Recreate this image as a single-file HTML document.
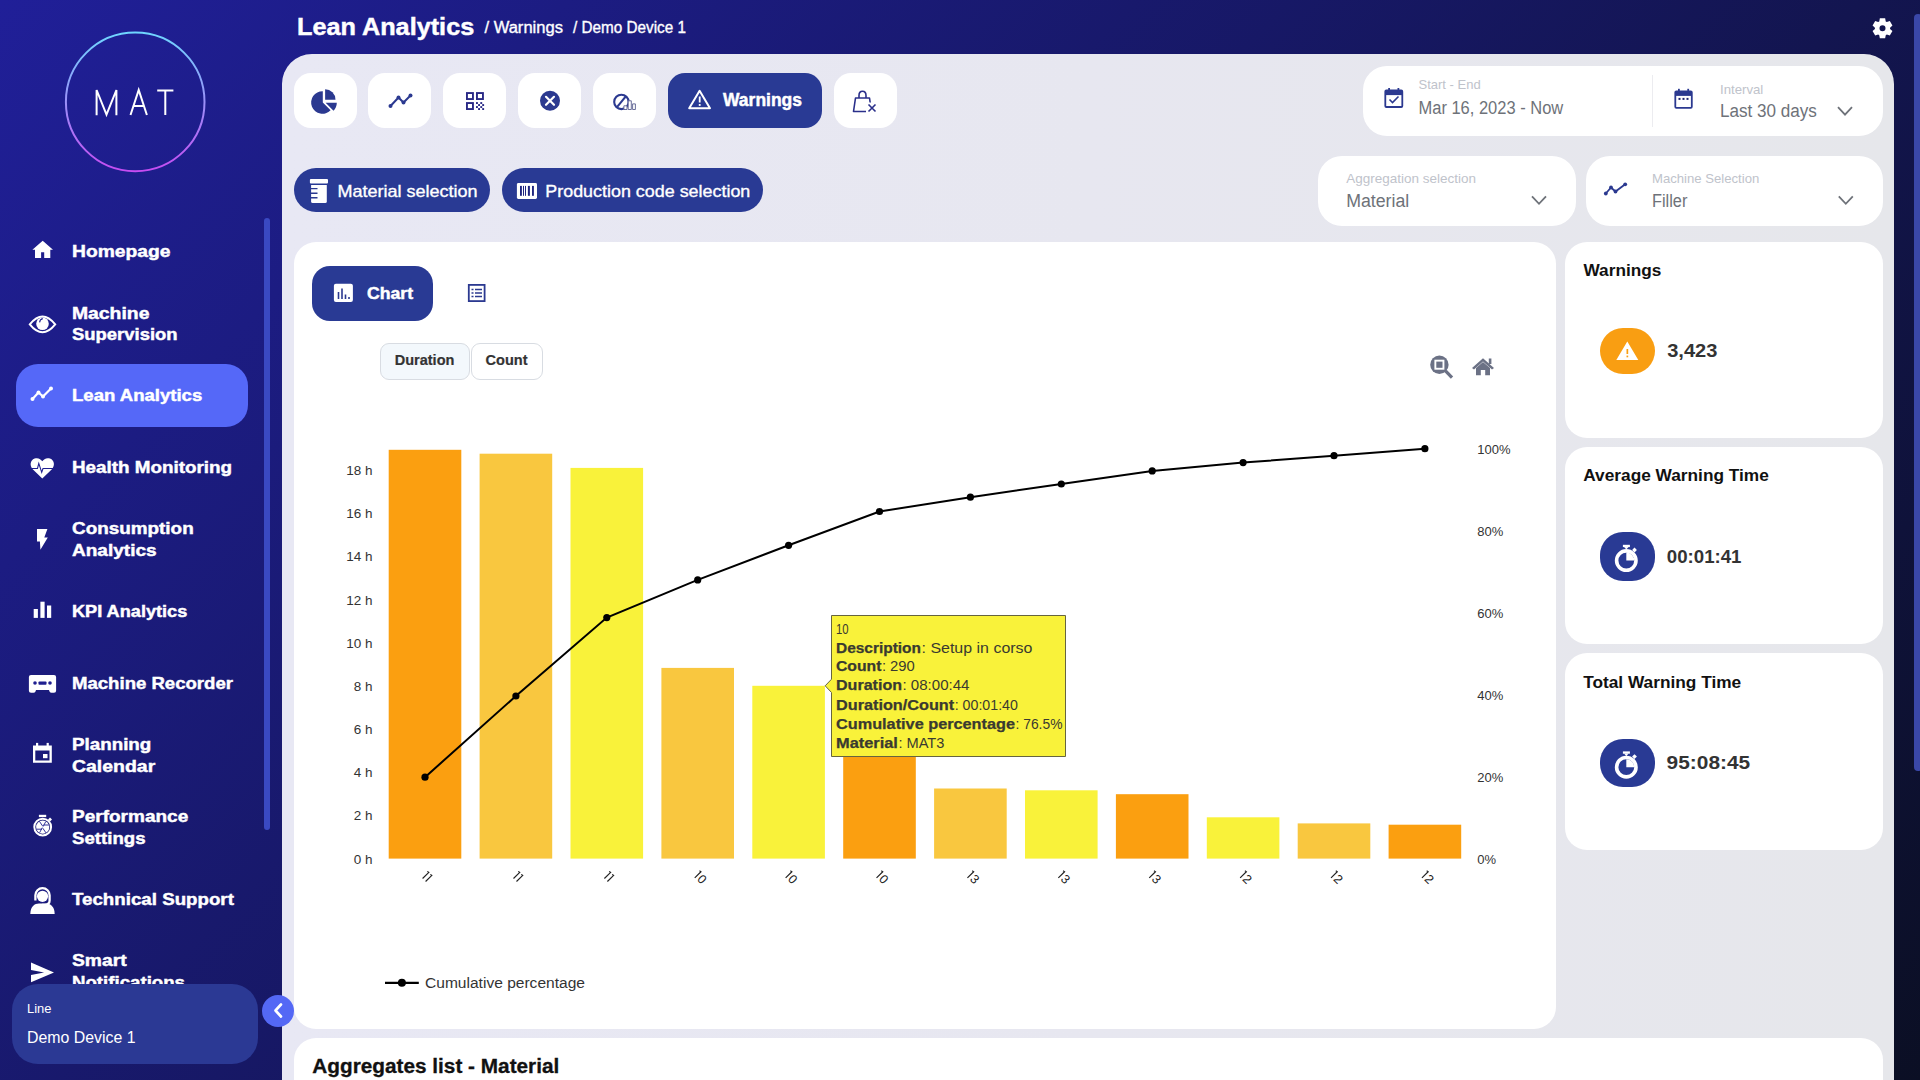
<!DOCTYPE html>
<html><head><meta charset="utf-8"><title>Lean Analytics</title><style>
*{margin:0;padding:0;box-sizing:border-box}
html,body{width:1920px;height:1080px;overflow:hidden}
body{position:relative;font-family:"Liberation Sans", sans-serif;background:linear-gradient(135deg,#201f98 0%,#0b0f24 100%)}
.a{position:absolute}
.card{position:absolute;background:#fff}
.btn{position:absolute;background:#fff;border-radius:16px}
svg text{font-family:"Liberation Sans", sans-serif}
</style></head>
<body>
<div class="a" style="left:16px;top:364px;width:232px;height:63px;background:#5568f8;border-radius:22px"></div>
<div class="a" style="left:264px;top:218px;width:6px;height:612px;background:#3a49c2;border-radius:3px"></div>
<div class="a" style="left:12px;top:984px;width:246px;height:80px;background:#2b3994;border-radius:26px"></div>
<div class="a" style="left:1914px;top:14px;width:8px;height:757px;background:#3a47a8;border-radius:4px"></div>
<div class="a" style="left:282px;top:54px;width:1612px;height:1146px;background:linear-gradient(90deg,#e8e8f4 0%,#e7e7f0 50%,#e6e7eb 100%);border-radius:30px 30px 0 0"></div>
<div class="a" style="left:294px;top:73px;width:62.5px;height:54.7px;background:#fff;border-radius:17px"></div>
<div class="a" style="left:368px;top:73px;width:63px;height:54.7px;background:#fff;border-radius:17px"></div>
<div class="a" style="left:443px;top:73px;width:63px;height:54.7px;background:#fff;border-radius:17px"></div>
<div class="a" style="left:518px;top:73px;width:63px;height:54.7px;background:#fff;border-radius:17px"></div>
<div class="a" style="left:593px;top:73px;width:63px;height:54.7px;background:#fff;border-radius:17px"></div>
<div class="a" style="left:834px;top:73px;width:63px;height:54.7px;background:#fff;border-radius:17px"></div>
<div class="a" style="left:668px;top:73px;width:154px;height:54.7px;background:#293a94;border-radius:17px"></div>
<div class="a" style="left:1363px;top:66px;width:520px;height:70px;background:#fff;border-radius:24px"></div>
<div class="a" style="left:1652.3px;top:74.5px;width:1.0px;height:52.5px;background:#ececf0"></div>
<div class="a" style="left:294px;top:168.2px;width:196px;height:44.30000000000001px;background:#293a94;border-radius:22px"></div>
<div class="a" style="left:502px;top:168.2px;width:261px;height:44.30000000000001px;background:#293a94;border-radius:22px"></div>
<div class="a" style="left:1318px;top:156.4px;width:258.4000000000001px;height:69.19999999999999px;background:#fff;border-radius:24px"></div>
<div class="a" style="left:1586px;top:156.4px;width:297px;height:69.19999999999999px;background:#fff;border-radius:24px"></div>
<div class="a" style="left:294px;top:242px;width:1262px;height:787px;background:#fff;border-radius:22px"></div>
<div class="a" style="left:312px;top:266.2px;width:121px;height:54.5px;background:#293a94;border-radius:18px"></div>
<div class="a" style="left:380.3px;top:343.1px;width:89.69999999999999px;height:37.39999999999998px;background:#f3f8fc;border:1px solid #d8dce2;border-radius:9px"></div>
<div class="a" style="left:471.4px;top:343.1px;width:71.39999999999998px;height:37.39999999999998px;background:#fff;border:1px solid #d8dce2;border-radius:9px"></div>
<div class="a" style="left:1565px;top:242px;width:318px;height:196px;background:#fff;border-radius:22px"></div>
<div class="a" style="left:1565px;top:447px;width:318px;height:196.5px;background:#fff;border-radius:22px"></div>
<div class="a" style="left:1565px;top:653px;width:318px;height:196.79999999999995px;background:#fff;border-radius:22px"></div>
<div class="a" style="left:1600px;top:328.1px;width:55px;height:46.39999999999998px;background:#f99e12;border-radius:23px"></div>
<div class="a" style="left:1600px;top:532.4px;width:54.5px;height:48.60000000000002px;background:#293a94;border-radius:23px"></div>
<div class="a" style="left:1599.5px;top:739px;width:55.5px;height:47.700000000000045px;background:#293a94;border-radius:23px"></div>
<div class="a" style="left:294px;top:1038px;width:1589px;height:262px;background:#fff;border-radius:22px"></div>
<div class="a" style="left:262px;top:994.5px;width:32px;height:32.0px;background:#5468f5;border-radius:50%"></div>
<svg class="a" style="left:0;top:0" width="280" height="200">
<defs><linearGradient id="lg" x1="0" y1="0" x2="0" y2="1"><stop offset="0" stop-color="#6fd6ff"/><stop offset="1" stop-color="#c64cf2"/></linearGradient></defs>
<circle cx="135.2" cy="101.9" r="69.3" fill="none" stroke="url(#lg)" stroke-width="2"/>
<path d="M96.6,115.2 V90 L106.5,114.5 L116.4,90 V115.2" fill="none" stroke="#fff" stroke-width="2"/>
<path d="M130.5,115 L138.7,90 L146.9,115 M133.6,106 H143.8" fill="none" stroke="#fff" stroke-width="2"/>
<path d="M157.2,90.5 H173.4 M165.3,90.5 V115" fill="none" stroke="#fff" stroke-width="2"/>
</svg>
<svg class="a" style="left:0;top:0" width="280" height="984">
<text x="72.0" y="988.2" font-size="17" font-weight="700" fill="#fff" stroke="#fff" stroke-width="0.45" textLength="113" lengthAdjust="spacingAndGlyphs">Notifications</text>
</svg>
<svg class="a" style="left:0;top:0" width="1920" height="1080">
<rect x="388.7" y="449.8" width="72.6" height="408.8" fill="#fb9f10"/>
<rect x="479.6" y="453.7" width="72.6" height="404.9" fill="#f9c73f"/>
<rect x="570.5" y="467.9" width="72.6" height="390.7" fill="#f9f23a"/>
<rect x="661.4" y="667.9" width="72.6" height="190.7" fill="#f9c73f"/>
<rect x="752.3" y="685.8" width="72.6" height="172.8" fill="#f9f23a"/>
<rect x="843.2" y="688.0" width="72.6" height="170.6" fill="#fb9f10"/>
<rect x="934.1" y="788.5" width="72.6" height="70.1" fill="#f9c73f"/>
<rect x="1025.0" y="790.3" width="72.6" height="68.3" fill="#f9f23a"/>
<rect x="1115.9" y="794.2" width="72.6" height="64.4" fill="#fb9f10"/>
<rect x="1206.8" y="817.3" width="72.6" height="41.3" fill="#f9f23a"/>
<rect x="1297.7" y="823.4" width="72.6" height="35.2" fill="#f9c73f"/>
<rect x="1388.6" y="824.7" width="72.6" height="33.9" fill="#fb9f10"/>
<text x="372.5" y="863.6" font-size="13.5" fill="#333" text-anchor="end">0 h</text>
<text x="372.5" y="820.4" font-size="13.5" fill="#333" text-anchor="end">2 h</text>
<text x="372.5" y="777.3" font-size="13.5" fill="#333" text-anchor="end">4 h</text>
<text x="372.5" y="734.1" font-size="13.5" fill="#333" text-anchor="end">6 h</text>
<text x="372.5" y="690.9" font-size="13.5" fill="#333" text-anchor="end">8 h</text>
<text x="372.5" y="647.8" font-size="13.5" fill="#333" text-anchor="end">10 h</text>
<text x="372.5" y="604.6" font-size="13.5" fill="#333" text-anchor="end">12 h</text>
<text x="372.5" y="561.4" font-size="13.5" fill="#333" text-anchor="end">14 h</text>
<text x="372.5" y="518.2" font-size="13.5" fill="#333" text-anchor="end">16 h</text>
<text x="372.5" y="475.1" font-size="13.5" fill="#333" text-anchor="end">18 h</text>
<text x="1477.3" y="863.7" font-size="13" fill="#333">0%</text>
<text x="1477.3" y="781.7" font-size="13" fill="#333">20%</text>
<text x="1477.3" y="699.7" font-size="13" fill="#333">40%</text>
<text x="1477.3" y="617.7" font-size="13" fill="#333">60%</text>
<text x="1477.3" y="535.7" font-size="13" fill="#333">80%</text>
<text x="1477.3" y="453.7" font-size="13" fill="#333">100%</text>
<g transform="translate(427.2,876.9) rotate(45)"><path d="M-3.82,-4.0 L-2.12,-4.4 V4.4" fill="none" stroke="#222" stroke-width="1.15"/><path d="M0.42,-4.0 L2.12,-4.4 V4.4" fill="none" stroke="#222" stroke-width="1.15"/></g>
<g transform="translate(518.1,876.9) rotate(45)"><path d="M-3.82,-4.0 L-2.12,-4.4 V4.4" fill="none" stroke="#222" stroke-width="1.15"/><path d="M0.42,-4.0 L2.12,-4.4 V4.4" fill="none" stroke="#222" stroke-width="1.15"/></g>
<g transform="translate(609.0,876.9) rotate(45)"><path d="M-3.82,-4.0 L-2.12,-4.4 V4.4" fill="none" stroke="#222" stroke-width="1.15"/><path d="M0.42,-4.0 L2.12,-4.4 V4.4" fill="none" stroke="#222" stroke-width="1.15"/></g>
<g transform="translate(699.9,876.9) rotate(45)"><path d="M-4.60,-4.0 L-2.90,-4.4 V4.4" fill="none" stroke="#222" stroke-width="1.15"/><text x="3.0" y="4.4" font-size="12.6" fill="#222" text-anchor="middle">0</text></g>
<g transform="translate(790.8,876.9) rotate(45)"><path d="M-4.60,-4.0 L-2.90,-4.4 V4.4" fill="none" stroke="#222" stroke-width="1.15"/><text x="3.0" y="4.4" font-size="12.6" fill="#222" text-anchor="middle">0</text></g>
<g transform="translate(881.7,876.9) rotate(45)"><path d="M-4.60,-4.0 L-2.90,-4.4 V4.4" fill="none" stroke="#222" stroke-width="1.15"/><text x="3.0" y="4.4" font-size="12.6" fill="#222" text-anchor="middle">0</text></g>
<g transform="translate(972.6,876.9) rotate(45)"><path d="M-4.60,-4.0 L-2.90,-4.4 V4.4" fill="none" stroke="#222" stroke-width="1.15"/><text x="3.0" y="4.4" font-size="12.6" fill="#222" text-anchor="middle">3</text></g>
<g transform="translate(1063.5,876.9) rotate(45)"><path d="M-4.60,-4.0 L-2.90,-4.4 V4.4" fill="none" stroke="#222" stroke-width="1.15"/><text x="3.0" y="4.4" font-size="12.6" fill="#222" text-anchor="middle">3</text></g>
<g transform="translate(1154.4,876.9) rotate(45)"><path d="M-4.60,-4.0 L-2.90,-4.4 V4.4" fill="none" stroke="#222" stroke-width="1.15"/><text x="3.0" y="4.4" font-size="12.6" fill="#222" text-anchor="middle">3</text></g>
<g transform="translate(1245.3,876.9) rotate(45)"><path d="M-4.60,-4.0 L-2.90,-4.4 V4.4" fill="none" stroke="#222" stroke-width="1.15"/><text x="3.0" y="4.4" font-size="12.6" fill="#222" text-anchor="middle">2</text></g>
<g transform="translate(1336.2,876.9) rotate(45)"><path d="M-4.60,-4.0 L-2.90,-4.4 V4.4" fill="none" stroke="#222" stroke-width="1.15"/><text x="3.0" y="4.4" font-size="12.6" fill="#222" text-anchor="middle">2</text></g>
<g transform="translate(1427.1,876.9) rotate(45)"><path d="M-4.60,-4.0 L-2.90,-4.4 V4.4" fill="none" stroke="#222" stroke-width="1.15"/><text x="3.0" y="4.4" font-size="12.6" fill="#222" text-anchor="middle">2</text></g>
<polyline points="425.0,777.2 515.9,696.0 606.8,617.6 697.7,579.9 788.6,545.3 879.5,511.5 970.4,497.2 1061.3,484.0 1152.2,470.9 1243.1,462.6 1334.0,455.7 1424.9,448.7" fill="none" stroke="#000" stroke-width="2"/>
<circle cx="425.0" cy="777.2" r="3.6" fill="#000"/>
<circle cx="515.9" cy="696.0" r="3.6" fill="#000"/>
<circle cx="606.8" cy="617.6" r="3.6" fill="#000"/>
<circle cx="697.7" cy="579.9" r="3.6" fill="#000"/>
<circle cx="788.6" cy="545.3" r="3.6" fill="#000"/>
<circle cx="879.5" cy="511.5" r="3.6" fill="#000"/>
<circle cx="970.4" cy="497.2" r="3.6" fill="#000"/>
<circle cx="1061.3" cy="484.0" r="3.6" fill="#000"/>
<circle cx="1152.2" cy="470.9" r="3.6" fill="#000"/>
<circle cx="1243.1" cy="462.6" r="3.6" fill="#000"/>
<circle cx="1334.0" cy="455.7" r="3.6" fill="#000"/>
<circle cx="1424.9" cy="448.7" r="3.6" fill="#000"/>
<line x1="385" y1="982.8" x2="418.8" y2="982.8" stroke="#000" stroke-width="2.2"/>
<circle cx="401.9" cy="982.8" r="4" fill="#000"/>
<path d="M831.5,615.5 H1065.5 V756.5 H831.5 V692.5 L825.2,685.8 L831.5,679.2 Z" fill="#f9f23a" stroke="#66653f" stroke-width="1"/>
<text x="836.0" y="633.5" font-size="14" fill="#3a3a30" textLength="12.6" lengthAdjust="spacingAndGlyphs">10</text>
<text x="836.0" y="652.5" font-size="14" font-weight="700" fill="#3a3a30" stroke="#3a3a30" stroke-width="0.25" textLength="85" lengthAdjust="spacingAndGlyphs">Description</text>
<text x="921.5" y="652.5" font-size="14" fill="#3a3a30" textLength="111.0" lengthAdjust="spacingAndGlyphs">: Setup in corso</text>
<text x="836.0" y="671.3" font-size="14" font-weight="700" fill="#3a3a30" stroke="#3a3a30" stroke-width="0.25" textLength="45.4" lengthAdjust="spacingAndGlyphs">Count</text>
<text x="881.9" y="671.3" font-size="14" fill="#3a3a30" textLength="32.9" lengthAdjust="spacingAndGlyphs">: 290</text>
<text x="836.0" y="690.4" font-size="14" font-weight="700" fill="#3a3a30" stroke="#3a3a30" stroke-width="0.25" textLength="66" lengthAdjust="spacingAndGlyphs">Duration</text>
<text x="902.5" y="690.4" font-size="14" fill="#3a3a30" textLength="67.0" lengthAdjust="spacingAndGlyphs">: 08:00:44</text>
<text x="836.0" y="709.6" font-size="14" font-weight="700" fill="#3a3a30" stroke="#3a3a30" stroke-width="0.25" textLength="118.2" lengthAdjust="spacingAndGlyphs">Duration/Count</text>
<text x="954.7" y="709.6" font-size="14" fill="#3a3a30" textLength="63.2" lengthAdjust="spacingAndGlyphs">: 00:01:40</text>
<text x="836.0" y="728.5" font-size="14" font-weight="700" fill="#3a3a30" stroke="#3a3a30" stroke-width="0.25" textLength="179" lengthAdjust="spacingAndGlyphs">Cumulative percentage</text>
<text x="1015.5" y="728.5" font-size="14" fill="#3a3a30" textLength="47.0" lengthAdjust="spacingAndGlyphs">: 76.5%</text>
<text x="836.0" y="747.5" font-size="14" font-weight="700" fill="#3a3a30" stroke="#3a3a30" stroke-width="0.25" textLength="61.9" lengthAdjust="spacingAndGlyphs">Material</text>
<text x="898.4" y="747.5" font-size="14" fill="#3a3a30" textLength="46.0" lengthAdjust="spacingAndGlyphs">: MAT3</text>
<path d="M42.7,240.7 L53,249.8 H50.3 V258.1 H44.2 V252.3 H41.1 V258.1 H35 V249.8 H32.4 Z" fill="#fff"/>
<path d="M29.8,324.4 Q42.5,308.6 55.2,324.4 Q42.5,340.2 29.8,324.4 Z" fill="none" stroke="#fff" stroke-width="2"/>
<circle cx="42.5" cy="323.7" r="6.3" fill="#fff"/>
<path d="M39.6,322.4 Q39.8,319.2 42.8,318.6" fill="none" stroke="#1f1f90" stroke-width="1.1"/>
<polyline points="32.5,399 38.5,392.5 43,396.5 51,388.5" fill="none" stroke="#fff" stroke-width="2.2" stroke-linejoin="round"/>
<circle cx="32.5" cy="399" r="2" fill="#fff"/>
<circle cx="38.5" cy="392.5" r="2" fill="#fff"/>
<circle cx="43" cy="396.5" r="2" fill="#fff"/>
<circle cx="51" cy="388.5" r="2" fill="#fff"/>
<path d="M42.3,478.5 L32.7,469.2 C29.5,466 30,460.5 34.6,458.6 C38,457.3 40.9,459.2 42.3,461.3 C43.7,459.2 46.6,457.3 50,458.6 C54.6,460.5 55.1,466 51.9,469.2 Z" fill="#fff"/>
<polyline points="30.5,468.5 37.5,468.5 38.8,463.4 41.7,472.3 43,468.5 54,468.5" fill="none" stroke="#1f1f90" stroke-width="1.1"/>
<path d="M37,529.1 H47.4 L44.3,537.6 H47.8 L40.4,549.8 L39.9,541.5 H37 Z" fill="#fff"/>
<rect x="33.7" y="609" width="4.2" height="8.9" fill="#fff"/><rect x="40.4" y="601.7" width="4.2" height="16.2" fill="#fff"/><rect x="47" y="605.5" width="4.2" height="12.4" fill="#fff"/>
<path d="M31,674.9 H54 Q56.1,674.9 56.1,677 V690.8 Q56.1,692.8 54,692.8 H51.5 Q50.2,692.8 49.5,691.5 L49,690 H36 L35.5,691.5 Q34.8,692.8 33.5,692.8 H31 Q28.9,692.8 28.9,690.8 V677 Q28.9,674.9 31,674.9 Z" fill="#fff"/>
<circle cx="35" cy="683" r="1.8" fill="#1f1f90"/><circle cx="50" cy="683" r="1.8" fill="#1f1f90"/><rect x="38.5" y="681.4" width="8" height="3.4" rx="0.8" fill="#1f1f90"/>
<path d="M33,745.5 H51.8 V762.8 H33 Z M35.3,750.5 V760.5 H49.5 V750.5 Z" fill="#fff" fill-rule="evenodd"/>
<rect x="36" y="742.9" width="2.2" height="4" fill="#fff"/><rect x="46.6" y="742.9" width="2.2" height="4" fill="#fff"/><rect x="43" y="754" width="4.5" height="4.2" fill="#fff"/>
<rect x="38.9" y="814.8" width="7.3" height="2.3" fill="#fff"/>
<circle cx="42.7" cy="827.1" r="8.4" fill="none" stroke="#fff" stroke-width="2"/>
<circle cx="42.7" cy="827.1" r="6.6" fill="#fff"/>
<path d="M36.3,829.2 H42 M49.1,825 H43.4 M39.4,821.3 L42.6,826 M46,832.9 L42.8,828.2 M45.8,821.5 L43.1,826.6 M39.6,832.7 L42.3,827.6" stroke="#1f1f90" stroke-width="0.9"/>
<rect x="48.6" y="818" width="2.8" height="2.8" transform="rotate(45 50 819.4)" fill="#fff"/>
<path d="M30.3,914 C30.6,906.5 34.5,903.6 39,903.6 H46 C50.5,903.6 54.4,906.5 54.7,914 Z" fill="#fff"/>
<circle cx="42.5" cy="896.3" r="6.6" fill="#1c1c86"/>
<circle cx="42.5" cy="896.3" r="5.6" fill="#fff"/>
<path d="M35.4,900.5 V895.3 A7.1,7.1 0 0 1 49.6,895.3 V900.5 Q49.6,904.8 44.5,904.8 H42" fill="none" stroke="#fff" stroke-width="2.3"/>
<path d="M35.6,895 A6.9,6.9 0 0 1 49.4,895" fill="none" stroke="#1c1c86" stroke-width="0.0"/>
<path d="M31,962.6 L54,972.5 L31,982.2 V974.9 L44.1,972.5 L31,970.1 Z" fill="#fff"/>
<polyline points="281,1004.5 275.5,1010.5 281,1016.5" fill="none" stroke="#fff" stroke-width="2.6" stroke-linecap="round" stroke-linejoin="round"/>
<path d="M1879.26,21.42 L1879.85,18.35 L1885.15,18.35 L1885.74,21.42 L1886.84,22.06 L1889.80,21.03 L1892.44,25.62 L1890.07,27.67 L1890.07,28.93 L1892.44,30.98 L1889.80,35.57 L1886.84,34.54 L1885.74,35.18 L1885.15,38.25 L1879.85,38.25 L1879.26,35.18 L1878.16,34.54 L1875.20,35.57 L1872.56,30.98 L1874.93,28.93 L1874.93,27.67 L1872.56,25.62 L1875.20,21.03 L1878.16,22.06 Z M1885.5,28.3 A3.0,3.0 0 1 0 1879.5,28.3 A3.0,3.0 0 1 0 1885.5,28.3 Z" fill="#fff" fill-rule="evenodd"/>
<path d="M322.8,102.5 V91.2 A11.3,11.3 0 1 0 330.6,110.3 Z" fill="#2b3990"/>
<path d="M325.1,99.7 V89.3 A10.4,10.4 0 0 1 335.5,99.7 Z" fill="#2b3990"/>
<path d="M325.6,102.8 H336.8 A11.2,11.2 0 0 1 333.5,110.7 Z" fill="#2b3990"/>
<polyline points="390.5,106 398.5,97.5 403.5,102.5 410.5,95.5" fill="none" stroke="#2b3990" stroke-width="2" stroke-linejoin="round"/>
<circle cx="390.5" cy="106" r="2" fill="#2b3990"/>
<circle cx="398.5" cy="97.5" r="2" fill="#2b3990"/>
<circle cx="403.5" cy="102.5" r="2" fill="#2b3990"/>
<circle cx="410.5" cy="95.5" r="2" fill="#2b3990"/>
<rect x="466.95" y="93.05" width="6" height="6" fill="none" stroke="#2a2a86" stroke-width="1.9"/>
<rect x="476.95" y="93.05" width="6" height="6" fill="none" stroke="#2a2a86" stroke-width="1.9"/>
<rect x="466.95" y="103.05" width="6" height="6" fill="none" stroke="#2a2a86" stroke-width="1.9"/>
<rect x="476" y="102.1" width="1.9" height="1.9" fill="#2a2a86"/>
<rect x="480.3" y="102.1" width="1.9" height="1.9" fill="#2a2a86"/>
<rect x="478.1" y="104.1" width="1.9" height="1.9" fill="#2a2a86"/>
<rect x="482.2" y="104.1" width="1.9" height="1.9" fill="#2a2a86"/>
<rect x="476" y="106.1" width="1.9" height="1.9" fill="#2a2a86"/>
<rect x="480.3" y="106.1" width="1.9" height="1.9" fill="#2a2a86"/>
<rect x="478.1" y="108.1" width="1.9" height="1.9" fill="#2a2a86"/>
<rect x="482.2" y="108.1" width="1.9" height="1.9" fill="#2a2a86"/>
<circle cx="550" cy="100.8" r="10" fill="#2b3990"/>
<path d="M546,96.8 L554,104.8 M554,96.8 L546,104.8" stroke="#fff" stroke-width="2.2" stroke-linecap="round"/>
<circle cx="621.4" cy="101.9" r="7.2" fill="none" stroke="#2b3990" stroke-width="2.1"/>
<path d="M617.2,106.8 L625.8,96.3" stroke="#2b3990" stroke-width="2.1"/>
<path d="M623.9,109.5 V105.8 H627 V109.5 Z M628.2,109.5 V100.8 H631.3 V109.5 Z M632.6,109.5 V103.9 H635.4 V109.5 Z" fill="#fff" stroke="#5a5f8e" stroke-width="0.9"/>
<path d="M699.6,90.8 L710,108.2 H689.2 Z" fill="none" stroke="#fff" stroke-width="2" stroke-linejoin="round"/>
<rect x="698.8" y="96.5" width="1.8" height="6" fill="#fff"/><rect x="698.8" y="104" width="1.8" height="1.9" fill="#fff"/>
<path d="M855.5,98 H869.5 L871.5,111.5 H853.5 Z" fill="none" stroke="#2a2f8a" stroke-width="1.6" stroke-linejoin="round"/>
<path d="M859,98 V95.5 Q859,91.2 862.5,91.2 Q866,91.2 866,95.5 V98" fill="none" stroke="#2a2f8a" stroke-width="1.6"/>
<rect x="866" y="102.5" width="12" height="11" fill="#fff"/>
<path d="M868.5,104.5 L875.5,111.5 M875.5,104.5 L868.5,111.5" stroke="#2a2f8a" stroke-width="1.6"/>
<rect x="309.9" y="178.9" width="18.1" height="4.5" rx="1" fill="#fff"/>
<path d="M311.1,184.9 H326.8 V201.5 Q326.8,203 325.3,203 H312.6 Q311.1,203 311.1,201.5 Z" fill="#fff"/>
<path d="M311,188.6 H317.5 M311,193.2 H317.5 M311,197.7 H317.5" stroke="#2b3990" stroke-width="1.4"/>
<rect x="516.9" y="183" width="20.1" height="16" rx="1.4" fill="#fff"/>
<rect x="520" y="185.9" width="1.9" height="9.9" fill="#1f2580"/><rect x="523" y="185.9" width="1" height="9.9" fill="#1f2580"/><rect x="525" y="185.9" width="1" height="9.9" fill="#1f2580"/><rect x="527.9" y="185.9" width="2" height="9.9" fill="#1f2580"/><rect x="532" y="185.9" width="1.9" height="9.9" fill="#1f2580"/>
<rect x="1385.3" y="90.5" width="17" height="16.5" rx="1" fill="none" stroke="#2b3990" stroke-width="1.8"/>
<rect x="1385.3" y="90.5" width="17" height="4.6" fill="#2b3990"/>
<rect x="1388.2" y="88" width="1.8" height="4" fill="#2b3990"/><rect x="1397.5" y="88" width="1.8" height="4" fill="#2b3990"/>
<polyline points="1389.5,99.5 1392.5,102.5 1398.5,96.5" fill="none" stroke="#2b3990" stroke-width="1.6"/>
<rect x="1675.3" y="91.3" width="16.5" height="16.5" rx="1" fill="none" stroke="#2b3990" stroke-width="1.8"/>
<rect x="1675.3" y="91.3" width="16.5" height="4.6" fill="#2b3990"/>
<rect x="1678" y="88.8" width="1.8" height="4" fill="#2b3990"/><rect x="1687.3" y="88.8" width="1.8" height="4" fill="#2b3990"/>
<rect x="1678.5" y="97.9" width="2" height="2" fill="#1f2470"/><rect x="1682.5" y="97.9" width="2" height="2" fill="#1f2470"/><rect x="1686.5" y="97.9" width="2" height="2" fill="#1f2470"/>
<polyline points="1838,107.10000000000001 1845,114.60000000000001 1852,107.10000000000001" fill="none" stroke="#6e7279" stroke-width="1.8"/>
<polyline points="1532,196.29999999999998 1539,203.79999999999998 1546,196.29999999999998" fill="none" stroke="#6e7279" stroke-width="1.8"/>
<polyline points="1838.8,196.29999999999998 1845.8,203.79999999999998 1852.8,196.29999999999998" fill="none" stroke="#6e7279" stroke-width="1.8"/>
<polyline points="1605.8,193.5 1611,187.5 1615.5,191.5 1625.2,184.3" fill="none" stroke="#2b3990" stroke-width="1.8"/>
<circle cx="1605.8" cy="193.5" r="1.9" fill="#2b3990"/>
<circle cx="1611" cy="187.5" r="1.9" fill="#2b3990"/>
<circle cx="1615.5" cy="191.5" r="1.9" fill="#2b3990"/>
<circle cx="1625.2" cy="184.3" r="1.9" fill="#2b3990"/>
<rect x="333.9" y="283.8" width="19" height="18.2" rx="2" fill="#fff"/>
<path d="M338.5,299 V292 M342,299 V288.5 M345.5,299 V294.5 M349,299 V297" stroke="#2b3990" stroke-width="1.6"/>
<rect x="468.8" y="284.9" width="15.8" height="16.2" fill="none" stroke="#2b3990" stroke-width="1.8"/>
<path d="M471.5,289.5 H473.5 M475,289.5 H482 M471.5,293 H473.5 M475,293 H482 M471.5,296.5 H473.5 M475,296.5 H482" stroke="#2b3990" stroke-width="1.6"/>
<circle cx="1439.4" cy="364.7" r="9.2" fill="#6b7185"/>
<rect x="1434.4" y="359.7" width="10" height="10" fill="#fff"/><rect x="1436.3" y="361.6" width="6.2" height="6.2" fill="#6b7185"/>
<path d="M1445.5,370.8 L1452,377.6" stroke="#6b7185" stroke-width="3.2"/>
<path d="M1472,368 L1483,358.2 L1494,368 L1492,369.5 L1483,361.5 L1474,369.5 Z" fill="#6b7185"/>
<path d="M1476,368 L1483,362 L1490,368 V375.3 H1485.2 V370 H1480.8 V375.3 H1476 Z" fill="#6b7185"/><rect x="1488.8" y="358.5" width="2.6" height="5.5" fill="#6b7185"/>
<path d="M1627.3,341.5 L1638.3,360 H1616.3 Z" fill="#fff"/>
<rect x="1626.5" y="349" width="1.7" height="5" fill="#f99e12"/><rect x="1626.5" y="355.6" width="1.7" height="1.7" fill="#f99e12"/>
<circle cx="1626.3" cy="560.6" r="9.7" fill="none" stroke="#fff" stroke-width="3.6"/>
<path d="M1626.3,560.6 V552.6 A8,8 0 0 1 1634.3,560.6 Z" fill="#fff"/>
<rect x="1622.8999999999999" y="544.8000000000001" width="7" height="2.3" fill="#fff"/><path d="M1624.1,547.0 H1628.5 L1626.3,549.6 Z" fill="#fff"/>
<rect x="1632.8" y="548.3000000000001" width="3.4" height="3.4" transform="rotate(45 1634.5 550.0)" fill="#fff"/>
<circle cx="1626.3" cy="767.2" r="9.7" fill="none" stroke="#fff" stroke-width="3.6"/>
<path d="M1626.3,767.2 V759.2 A8,8 0 0 1 1634.3,767.2 Z" fill="#fff"/>
<rect x="1622.8999999999999" y="751.4000000000001" width="7" height="2.3" fill="#fff"/><path d="M1624.1,753.6 H1628.5 L1626.3,756.2 Z" fill="#fff"/>
<rect x="1632.8" y="754.9000000000001" width="3.4" height="3.4" transform="rotate(45 1634.5 756.6)" fill="#fff"/>
<text x="72.0" y="257.2" font-size="17" font-weight="700" fill="#fff" textLength="98.4" lengthAdjust="spacingAndGlyphs" stroke="#fff" stroke-width="0.45">Homepage</text>
<text x="72.0" y="318.5" font-size="17" font-weight="700" fill="#fff" textLength="77.4" lengthAdjust="spacingAndGlyphs" stroke="#fff" stroke-width="0.45">Machine</text>
<text x="72.0" y="339.8" font-size="17" font-weight="700" fill="#fff" textLength="105.6" lengthAdjust="spacingAndGlyphs" stroke="#fff" stroke-width="0.45">Supervision</text>
<text x="72.0" y="401.0" font-size="17" font-weight="700" fill="#fff" textLength="130.2" lengthAdjust="spacingAndGlyphs" stroke="#fff" stroke-width="0.45">Lean Analytics</text>
<text x="72.0" y="473.0" font-size="17" font-weight="700" fill="#fff" textLength="160.0" lengthAdjust="spacingAndGlyphs" stroke="#fff" stroke-width="0.45">Health Monitoring</text>
<text x="72.0" y="534.3" font-size="17" font-weight="700" fill="#fff" textLength="121.7" lengthAdjust="spacingAndGlyphs" stroke="#fff" stroke-width="0.45">Consumption</text>
<text x="72.0" y="556.0" font-size="17" font-weight="700" fill="#fff" textLength="84.6" lengthAdjust="spacingAndGlyphs" stroke="#fff" stroke-width="0.45">Analytics</text>
<text x="72.0" y="617.3" font-size="17" font-weight="700" fill="#fff" textLength="115.3" lengthAdjust="spacingAndGlyphs" stroke="#fff" stroke-width="0.45">KPI Analytics</text>
<text x="72.0" y="688.9" font-size="17" font-weight="700" fill="#fff" textLength="161.0" lengthAdjust="spacingAndGlyphs" stroke="#fff" stroke-width="0.45">Machine Recorder</text>
<text x="72.0" y="750.0" font-size="17" font-weight="700" fill="#fff" textLength="79.3" lengthAdjust="spacingAndGlyphs" stroke="#fff" stroke-width="0.45">Planning</text>
<text x="72.0" y="771.9" font-size="17" font-weight="700" fill="#fff" textLength="83.2" lengthAdjust="spacingAndGlyphs" stroke="#fff" stroke-width="0.45">Calendar</text>
<text x="72.0" y="822.0" font-size="17" font-weight="700" fill="#fff" textLength="116.2" lengthAdjust="spacingAndGlyphs" stroke="#fff" stroke-width="0.45">Performance</text>
<text x="72.0" y="843.8" font-size="17" font-weight="700" fill="#fff" textLength="73.5" lengthAdjust="spacingAndGlyphs" stroke="#fff" stroke-width="0.45">Settings</text>
<text x="72.0" y="904.8" font-size="17" font-weight="700" fill="#fff" textLength="161.9" lengthAdjust="spacingAndGlyphs" stroke="#fff" stroke-width="0.45">Technical Support</text>
<text x="72.0" y="966.3" font-size="17" font-weight="700" fill="#fff" textLength="54.6" lengthAdjust="spacingAndGlyphs" stroke="#fff" stroke-width="0.45">Smart</text>
<text x="27" y="1013.2" font-size="13" font-weight="400" fill="#fff" textLength="24.4" lengthAdjust="spacingAndGlyphs">Line</text>
<text x="27" y="1043.3" font-size="16" font-weight="400" fill="#fff" textLength="108.5" lengthAdjust="spacingAndGlyphs">Demo Device 1</text>
<text x="297" y="35.0" font-size="24.5" font-weight="700" fill="#fff" textLength="177.2" lengthAdjust="spacingAndGlyphs" stroke="#fff" stroke-width="0.45">Lean Analytics</text>
<text x="484.5" y="33.3" font-size="16" font-weight="400" fill="#fff" textLength="78.4" lengthAdjust="spacingAndGlyphs" stroke="#fff" stroke-width="0.35">/ Warnings</text>
<text x="573" y="33.3" font-size="16" font-weight="400" fill="#fff" textLength="113" lengthAdjust="spacingAndGlyphs" stroke="#fff" stroke-width="0.35">/ Demo Device 1</text>
<text x="723" y="106.25" font-size="17.5" font-weight="700" fill="#fff" textLength="79" lengthAdjust="spacingAndGlyphs" stroke="#fff" stroke-width="0.45">Warnings</text>
<text x="1418.5" y="88.5" font-size="13" font-weight="400" fill="#c0c3cb" textLength="62.2" lengthAdjust="spacingAndGlyphs">Start - End</text>
<text x="1418.5" y="113.7" font-size="18" font-weight="400" fill="#6e7279" textLength="144.7" lengthAdjust="spacingAndGlyphs">Mar 16, 2023 - Now</text>
<text x="1720" y="93.7" font-size="13" font-weight="400" fill="#c0c3cb" textLength="43.3" lengthAdjust="spacingAndGlyphs">Interval</text>
<text x="1720" y="116.6" font-size="18" font-weight="400" fill="#6e7279" textLength="96.9" lengthAdjust="spacingAndGlyphs">Last 30 days</text>
<text x="337.5" y="196.9" font-size="17" font-weight="400" fill="#fff" textLength="140.1" lengthAdjust="spacingAndGlyphs" stroke="#fff" stroke-width="0.35">Material selection</text>
<text x="545.3" y="196.9" font-size="17" font-weight="400" fill="#fff" textLength="205" lengthAdjust="spacingAndGlyphs" stroke="#fff" stroke-width="0.35">Production code selection</text>
<text x="1346.2" y="183.4" font-size="13" font-weight="400" fill="#c0c3cb" textLength="129.7" lengthAdjust="spacingAndGlyphs">Aggregation selection</text>
<text x="1346.2" y="207.1" font-size="18" font-weight="400" fill="#6e7279" textLength="63" lengthAdjust="spacingAndGlyphs">Material</text>
<text x="1652" y="183.4" font-size="13" font-weight="400" fill="#c0c3cb" textLength="107.3" lengthAdjust="spacingAndGlyphs">Machine Selection</text>
<text x="1652" y="207.1" font-size="18" font-weight="400" fill="#6e7279" textLength="35.4" lengthAdjust="spacingAndGlyphs">Filler</text>
<text x="367" y="299.2" font-size="16" font-weight="700" fill="#fff" textLength="46" lengthAdjust="spacingAndGlyphs" stroke="#fff" stroke-width="0.45">Chart</text>
<text x="394.7" y="365.3" font-size="14" font-weight="700" fill="#333" textLength="59.7" lengthAdjust="spacingAndGlyphs" stroke="#333" stroke-width="0.2">Duration</text>
<text x="485.6" y="365.3" font-size="14" font-weight="700" fill="#333" textLength="42" lengthAdjust="spacingAndGlyphs" stroke="#333" stroke-width="0.2">Count</text>
<text x="425" y="988.1" font-size="14" font-weight="400" fill="#333" textLength="160" lengthAdjust="spacingAndGlyphs">Cumulative percentage</text>
<text x="1583.5" y="276.4" font-size="16" font-weight="700" fill="#111" textLength="77.8" lengthAdjust="spacingAndGlyphs">Warnings</text>
<text x="1667.2" y="356.6" font-size="19" font-weight="700" fill="#333" textLength="50.2" lengthAdjust="spacingAndGlyphs">3,423</text>
<text x="1583.3" y="481.0" font-size="16" font-weight="700" fill="#111" textLength="185.5" lengthAdjust="spacingAndGlyphs">Average Warning Time</text>
<text x="1666.8" y="562.6" font-size="19" font-weight="700" fill="#333" textLength="74.7" lengthAdjust="spacingAndGlyphs">00:01:41</text>
<text x="1583.2" y="688.0" font-size="16" font-weight="700" fill="#111" textLength="158" lengthAdjust="spacingAndGlyphs">Total Warning Time</text>
<text x="1666.6" y="768.7" font-size="19" font-weight="700" fill="#333" textLength="83.6" lengthAdjust="spacingAndGlyphs">95:08:45</text>
<text x="312.3" y="1073.0" font-size="20" font-weight="700" fill="#111" textLength="247" lengthAdjust="spacingAndGlyphs" stroke="#111" stroke-width="0.3">Aggregates list - Material</text>
</svg>
</body></html>
